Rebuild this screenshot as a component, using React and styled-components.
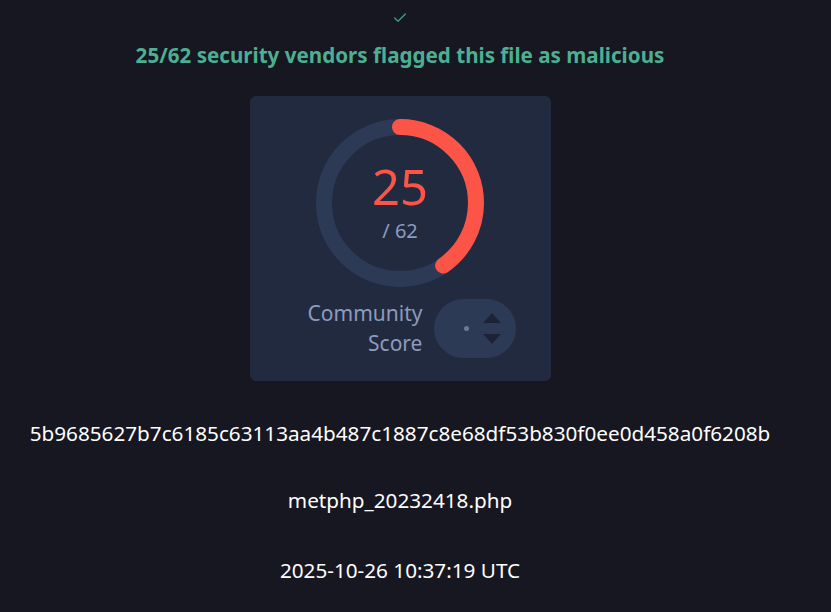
import React from 'react';
import styled, { createGlobalStyle } from 'styled-components';
import { Check } from 'lucide-react';

const GlobalStyle = createGlobalStyle`
  html, body {
    margin: 0;
    padding: 0;
    background: #171722;
    font-family: 'Noto Sans', 'Open Sans', sans-serif;
  }
`;

const Page = styled.div`
  width: 800px;
  min-height: 612px;
  display: flex;
  flex-direction: column;
  align-items: center;
  padding-top: 10px;
  box-sizing: border-box;
`;

const Title = styled.h1`
  margin: 15px 0 0;
  font-size: 20.6px;
  line-height: 28px;
  font-weight: 700;
  color: #4daf92;
`;

const ScoreCard = styled.div`
  margin-top: 27px;
  width: 301px;
  height: 285px;
  box-sizing: border-box;
  padding-top: 23px;
  background: #222a40;
  border-radius: 6px;
  display: flex;
  flex-direction: column;
  align-items: center;
`;

const Ring = styled.div`
  position: relative;
  width: 168px;
  height: 168px;
`;

const RingLabel = styled.div`
  position: absolute;
  inset: 0;
  display: flex;
  flex-direction: column;
  align-items: center;
  justify-content: center;
`;

const Detections = styled.div`
  font-size: 49px;
  line-height: 48px;
  color: #fc5547;
  margin-top: -2px;
`;

const Total = styled.div`
  font-size: 20px;
  line-height: 22px;
  color: #8a9bc0;
  margin-top: 10px;
`;

const VoteRow = styled.div`
  margin-top: 11px;
  padding-left: 24px;
  display: flex;
  align-items: center;
  gap: 12px;
`;

const VoteLabel = styled.div`
  font-size: 21px;
  line-height: 30px;
  color: #8c9bbc;
  text-align: right;
`;

const VotePill = styled.div`
  width: 82px;
  height: 59px;
  border-radius: 30px;
  background: #2d3a56;
  display: flex;
  align-items: center;
  justify-content: flex-end;
  gap: 14px;
  padding-right: 15px;
  box-sizing: border-box;
`;

const Dot = styled.span`
  width: 5px;
  height: 5px;
  border-radius: 50%;
  background: #6c7a96;
`;

const Arrows = styled.div`
  display: flex;
  flex-direction: column;
  gap: 11px;
`;

const Arrow = styled.span`
  width: 0;
  height: 0;
  border-left: 9px solid transparent;
  border-right: 9px solid transparent;
  ${(p) => (p.$up ? 'border-bottom: 10px solid #1c2336;' : 'border-top: 10px solid #1c2336;')}
`;

const Info = styled.div`
  margin-top: ${(p) => p.$top}px;
  font-size: 20.7px;
  line-height: 28px;
  color: #ffffff;
`;

const RADIUS = 76;
const CIRC = 2 * Math.PI * RADIUS;

const ScoreRing = ({ malicious, total }) => (
  <Ring>
    <svg width="168" height="168" viewBox="0 0 168 168">
      <circle cx="84" cy="84" r={RADIUS} fill="none" stroke="#2d3a56" strokeWidth="16" />
      <circle
        cx="84"
        cy="84"
        r={RADIUS}
        fill="none"
        stroke="#fc5547"
        strokeWidth="16"
        strokeLinecap="round"
        strokeDasharray={`${(malicious / total) * CIRC} ${CIRC}`}
        transform="rotate(-90 84 84)"
      />
    </svg>
    <RingLabel>
      <Detections>{malicious}</Detections>
      <Total>/ {total}</Total>
    </RingLabel>
  </Ring>
);

const App = () => (
  <>
    <GlobalStyle />
    <Page>
      <Check size={16} color="#3f9c86" strokeWidth={2} />
      <Title>25/62 security vendors flagged this file as malicious</Title>
      <ScoreCard>
        <ScoreRing malicious={25} total={62} />
        <VoteRow>
          <VoteLabel>
            Community
            <br />
            Score
          </VoteLabel>
          <VotePill>
            <Dot />
            <Arrows>
              <Arrow $up />
              <Arrow />
            </Arrows>
          </VotePill>
        </VoteRow>
      </ScoreCard>
      <Info $top={38}>5b9685627b7c6185c63113aa4b487c1887c8e68df53b830f0ee0d458a0f6208b</Info>
      <Info $top={39}>metphp_20232418.php</Info>
      <Info $top={42}>2025-10-26 10:37:19 UTC</Info>
    </Page>
  </>
);

export default App;
